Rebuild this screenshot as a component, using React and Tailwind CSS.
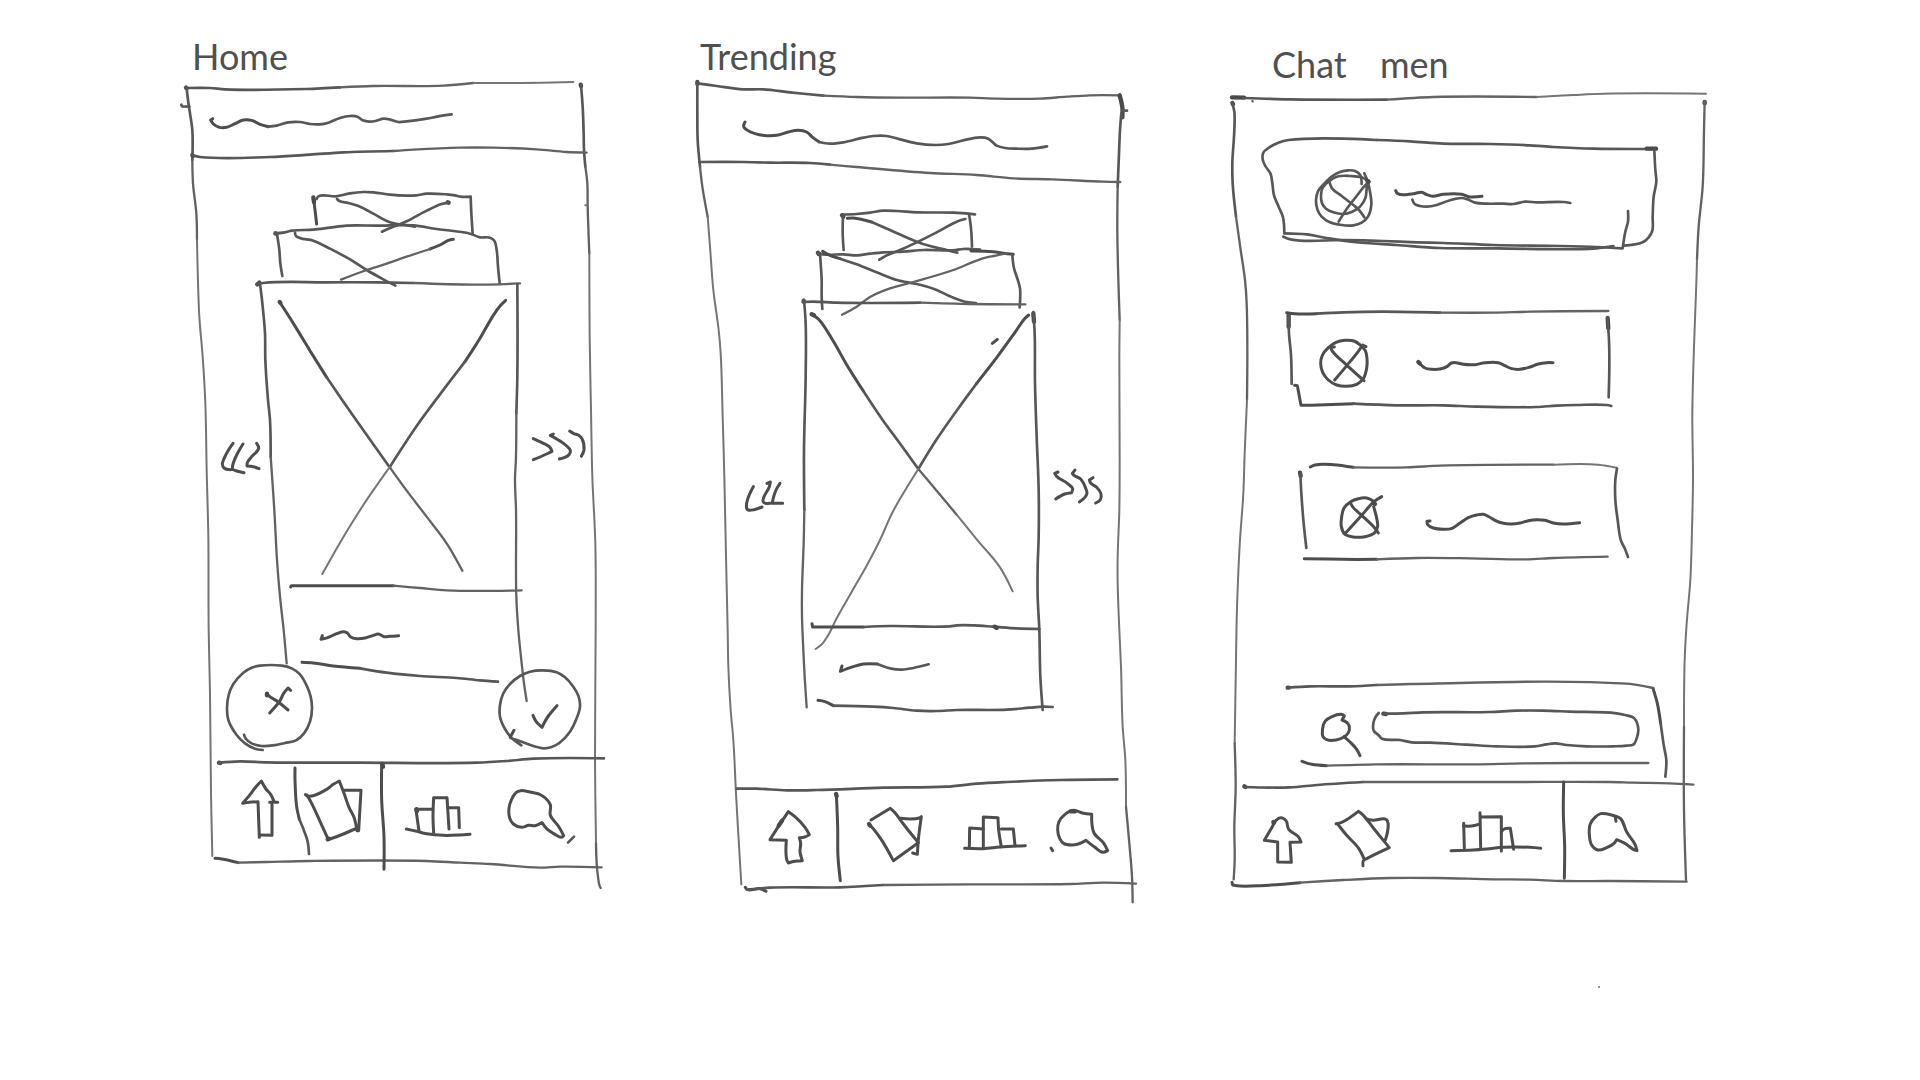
import React from "react";

/* Pen weights, in the ink's own units (three to a pixel). */
const PENS = {
  fine: { width: 6, color: "#757575" },
  line: { width: 7, color: "#636363" },
  pen: { width: 8, color: "#575757" },
  bold: { width: 9, color: "#4d4d4d" },
  knob: { width: 13, color: "#4a4a4a" },
};

/* Turns "x,y x,y ..." into a smooth path that keeps its sharp corners. */
function toPath(points) {
  const p = points.split(" ").map((s) => s.split(",").map(Number));
  const dist = (a, b) => Math.hypot(b[0] - a[0], b[1] - a[1]) || 1;
  const dirs = p.map((c, i) => {
    const a = p[i - 1];
    const b = p[i + 1];
    if (!a || !b) return [0, 0];
    const u = [(c[0] - a[0]) / dist(a, c), (c[1] - a[1]) / dist(a, c)];
    const v = [(b[0] - c[0]) / dist(c, b), (b[1] - c[1]) / dist(c, b)];
    if (u[0] * v[0] + u[1] * v[1] < 0.45) return [0, 0];
    const n = Math.hypot(u[0] + v[0], u[1] + v[1]);
    return [(u[0] + v[0]) / n, (u[1] + v[1]) / n];
  });
  let d = `M${p[0][0]} ${p[0][1]}`;
  for (let i = 1; i < p.length; i++) {
    const k = dist(p[i - 1], p[i]) * 0.33;
    const [a, b] = [p[i - 1], p[i]];
    d += `C${a[0] + dirs[i - 1][0] * k} ${a[1] + dirs[i - 1][1] * k} ${b[0] - dirs[i][0] * k} ${b[1] - dirs[i][1] * k} ${b[0]} ${b[1]}`;
  }
  return d;
}

/* Pen strokes laid over the element that holds them. */
function Ink({ box, at, strokes }) {
  const [x, y, w, h] = box;
  return (
    <svg
      aria-hidden="true"
      className="pointer-events-none absolute inset-0 h-full w-full overflow-visible"
      viewBox={`${(x - at[0]) * 3} ${(y - at[1]) * 3} ${w * 3} ${h * 3}`}
      preserveAspectRatio="none"
      fill="none"
      strokeLinecap="round"
      strokeLinejoin="round"
    >
      {strokes.map(([pen, points], i) => (
        <path key={i} d={toPath(points)} stroke={PENS[pen].color} strokeWidth={PENS[pen].width} />
      ))}
    </svg>
  );
}

function Tab({ label, box, at, strokes }) {
  return (
    <button type="button" aria-label={label} className="relative h-full cursor-pointer">
      <Ink box={box} at={at} strokes={strokes} />
    </button>
  );
}

function Title({ children, className }) {
  return (
    <h2 className={`font-[Lato,sans-serif] text-4xl leading-10 text-[#505050] ${className}`}>{children}</h2>
  );
}

const A1 = [160, 20];
const A2 = [160, 270];
const A3 = [160, 560];

function Home() {
  return (
    <section className="pt-9">
      <Title className="mb-2">Home</Title>
      <div className="relative">
        <Ink
          box={[192, 84, 400, 780]}
          at={A1}
          strokes={[
            ["pen", "78,204 150,204 195,208 440,207 540,202"],
            ["line", "540,202 640,198 850,197 940,189"],
            ["fine", "940,189 1080,189 1240,186"],
            ["knob", "78,203 80,205"],
            ["pen", "80,204 84,240 90,280 97,330 97,420"],
            ["line", "97,420 99,490 109,580 111,660"],
            ["fine", "111,660 113,750 118,890 128,1010 136,1150 140,1350 145,1550 146,1830 150,2020 153,2320 157,2508"],
            ["pen", "64,254 66,259 88,260"],
            ["knob", "1262,194 1263,198"],
            ["pen", "1263,195 1268,260 1271,340 1272,390 1276,440"],
            ["line", "1276,440 1282,490 1283,560 1288,700"],
            ["fine", "1288,700 1289,950 1293,1170 1297,1370 1306,1570 1307,1830 1305,2220 1308,2470"],
            ["line", "1308,2470 1310,2530 1314,2570 1318,2595 1322,2604"],
            ["bold", "165,2515 185,2517 235,2528"],
            ["line", "235,2528 320,2526 450,2523 800,2523 900,2528 990,2532 1140,2543 1200,2540 1325,2542"],
            ["fine", "1276,556 1279,556"],
          ]}
        />
        <header className="relative h-18">
          <Ink
            box={[192, 84, 400, 72]}
            at={A1}
            strokes={[
              ["knob", "97,406 99,407"],
              ["pen", "97,406 120,411 330,411 450,404 550,397 700,393"],
              ["line", "700,393 760,389 900,383 1000,383 1130,388 1220,396 1280,398"],
              ["bold", "158,296 152,300 160,312 178,322 200,322 225,311 250,300 275,301 300,313 325,320"],
              ["pen", "325,320 350,317 385,307 420,306 450,312 480,313 505,308 540,294 570,288 592,290 608,301 628,305 650,302 670,296 688,298 715,306 740,304 800,296 835,289 875,283"],
            ]}
          />
        </header>
        <div className="grid grid-cols-[70fr_256fr_74fr]">
          <div className="pt-[280px]">
            <button type="button" aria-label="Previous" className="relative ml-auto block h-12 w-11 cursor-pointer">
              <Ink
                box={[218, 436, 44, 48]}
                at={A2}
                strokes={[
                  ["bold", "219,520 205,541 190,571 187,582 192,594 212,599"],
                  ["bold", "249,522 230,555 218,586 217,598 230,603 252,608"],
                  ["bold", "290,520 296,535 275,560 262,578 261,588 280,590 297,596"],
                ]}
              />
            </button>
          </div>
          <article className="flex flex-col items-center pt-9">
            <div className="relative h-9 w-40">
              <Ink
                box={[310, 192, 160, 36]}
                at={A1}
                strokes={[
                  ["bold", "460,532 462,546 465,570 470,612"],
                  ["knob", "460,532 462,546"],
                  ["pen", "470,537 475,529 528,529 570,520 610,516 640,517 690,524 740,527 770,526 800,521 860,523 885,526 902,530 932,530 934,580 938,640"],
                  ["pen", "531,537 538,543 565,549 600,560 640,581 680,603 705,611 735,615 765,620"],
                  ["knob", "863,547 866,548"],
                  ["pen", "865,548 845,552 800,572 740,604 705,618 666,635"],
                ]}
              />
            </div>
            <div className="relative h-14 w-56">
              <Ink
                box={[278, 228, 224, 56]}
                at={A1}
                strokes={[
                  ["knob", "346,640 349,641"],
                  ["pen", "346,640 370,638 395,632 460,629 510,623 560,617 650,617 760,616 830,627 880,633 930,641 960,652 990,653 1003,662 1010,690 1014,740 1019,790"],
                  ["pen", "351,642 358,690 361,730 367,768"],
                  ["pen", "405,638 408,648 460,662 510,686 570,718 620,750 670,778 706,797"],
                  ["bold", "880,658 865,661 840,675 810,687"],
                  ["line", "810,687 740,710 680,731 620,750 543,779"],
                ]}
              />
            </div>
            <div className="relative h-[304px] w-full">
              <Ink
                box={[262, 284, 256, 304]}
                at={A2}
                strokes={[
                  ["knob", "292,43 298,38"],
                  ["pen", "290,43 310,39 500,37 650,37 760,39"],
                  ["line", "760,39 940,44 1020,43 1080,40"],
                  ["pen", "300,42 306,90 315,190 316,270 324,390 330,450 332,560"],
                  ["line", "332,560 343,720 351,870 360,980 371,1080 380,1180"],
                  ["pen", "1072,42 1072,320 1069,430"],
                  ["line", "1069,430 1068,560 1065,630 1068,720 1069,980 1075,1080 1085,1180 1092,1240 1100,1293"],
                  ["knob", "359,96 361,98"],
                  ["bold", "359,96 400,160 450,242 500,322"],
                  ["pen", "500,322 580,438 690,593"],
                  ["line", "690,593 740,662 800,740 860,820 907,902"],
                  ["bold", "1037,91 1022,106 1000,136 960,205 915,275"],
                  ["pen", "915,275 840,373 770,468 690,590"],
                  ["fine", "690,590 610,705 540,818 487,912"],
                ]}
              />
            </div>
            <div className="relative h-19 w-full">
              <Ink
                box={[262, 588, 256, 76]}
                at={A3}
                strokes={[
                  ["bold", "392,81 394,77 600,77 700,77"],
                  ["line", "700,77 780,84 860,91 1085,91"],
                  ["bold", "487,227 483,238 505,232 530,221 552,215 562,219 572,231 590,236 615,234 640,226 655,222 672,230 690,229 716,227"],
                  ["bold", "426,307 460,309 520,318 600,325"],
                  ["pen", "600,325 680,338 780,348 890,354 960,361 1014,365"],
                ]}
              />
            </div>
          </article>
          <div className="pt-[264px]">
            <button type="button" aria-label="Next" className="relative ml-3 block h-12 w-15 cursor-pointer">
              <Ink
                box={[530, 420, 60, 48]}
                at={A2}
                strokes={[
                  ["bold", "1120,506 1150,520 1168,530 1176,544 1160,552 1120,569"],
                  ["bold", "1180,492 1171,496 1195,510 1220,528 1231,541 1227,554 1198,567"],
                  ["bold", "1229,483 1240,490 1258,497 1266,506 1272,540 1264,559"],
                ]}
              />
            </button>
          </div>
        </div>
        <div className="mb-2 flex justify-between pr-2 pl-8">
          <button type="button" aria-label="Reject" className="relative size-22 cursor-pointer rounded-full">
            <Ink
              box={[224, 664, 88, 88]}
              at={A3}
              strokes={[
                ["pen", "308,570 285,566 255,550 230,525 205,480 201,445 206,405 220,372 250,338 275,323 300,317 365,317 395,325 420,343 440,377 452,410 456,445 450,485 432,520 408,541 375,549 340,556 305,558 275,550 258,537 252,524"],
                ["bold", "321,400 323,404 355,426 384,450"],
                ["bold", "392,391 384,384 371,400 360,422 329,459"],
                ["knob", "321,401 321,406"],
              ]}
            />
          </button>
          <button type="button" aria-label="Accept" className="relative size-22 cursor-pointer rounded-full">
            <Ink
              box={[496, 664, 88, 88]}
              at={A3}
              strokes={[
                ["pen", "1084,556 1055,534 1035,507 1020,470 1020,435 1029,402 1050,372 1080,348 1110,335 1150,331 1190,337 1215,352 1240,380 1256,410 1260,440 1250,475 1230,515 1198,549 1175,561 1150,565 1120,558 1085,545 1052,534"],
                ["bold", "1062,511 1051,531"],
                ["bold", "1119,466 1128,484 1146,502 1154,486 1165,468 1191,437"],
              ]}
            />
          </button>
        </div>
        <nav className="relative grid h-26 grid-cols-[108fr_84fr_106fr_102fr]">
          <Ink
            box={[192, 760, 400, 104]}
            at={A3}
            strokes={[
              ["knob", "177,608 181,609"],
              ["pen", "177,608 240,604 320,607 600,608 950,608 1040,603 1120,596 1332,595"],
              ["bold", "405,624 405,660 410,740 418,778"],
              ["pen", "418,778 432,812 443,845 447,882"],
              ["bold", "665,612 665,720 672,830 672,928"],
              ["knob", "667,612 669,620"],
              ["pen", "1242,830 1224,848"],
            ]}
          />
          <Tab
            label="Up"
            box={[192, 760, 108, 104]}
            at={A3}
            strokes={[
              ["bold", "298,832 294,725 268,727 248,730 270,704 288,680 304,663 318,687 332,703 343,727 353,727"],
              ["bold", "329,727 336,727 336,826 299,825"],
            ]}
          />
          <Tab
            label="Cards"
            box={[300, 760, 84, 104]}
            at={A3}
            strokes={[
              ["bold", "436,704 445,709 500,688 520,673 538,663 552,700 567,742 582,772 591,812 596,812 603,691 550,691"],
              ["bold", "441,705 455,730 480,784 505,839 535,828 585,807"],
              ["knob", "503,838 507,836"],
            ]}
          />
          <Tab
            label="Rankings"
            box={[384, 760, 106, 104]}
            at={A3}
            strokes={[
              ["bold", "739,807 770,814 800,821 850,826 900,825 930,823"],
              ["bold", "768,750 777,814"],
              ["knob", "769,748 771,753"],
              ["bold", "770,748 817,748"],
              ["bold", "821,818 819,770 821,713 861,713 867,807"],
              ["bold", "864,743 896,743 898,803"],
            ]}
          />
          <Tab
            label="Chat"
            box={[490, 760, 102, 104]}
            at={A3}
            strokes={[
              ["bold", "1137,702 1110,696 1082,692 1068,698 1054,720 1047,745 1049,774 1060,792 1085,802 1106,796 1125,797 1146,788 1160,806 1185,823 1204,832 1211,827 1195,798 1171,766 1171,734 1156,714 1137,702"],
            ]}
          />
        </nav>
      </div>
    </section>
  );
}

const B1 = [670, 20];
const B2 = [670, 290];
const B3 = [670, 600];

function Trending() {
  return (
    <section className="pt-9">
      <Title className="mb-2">Trending</Title>
      <div className="relative">
        <Ink
          box={[700, 84, 424, 804]}
          at={B1}
          strokes={[
            ["knob", "82,186 82,192"],
            ["pen", "82,190 140,198 220,208 280,208 360,217 460,227"],
            ["line", "460,227 560,231 690,233 900,233 980,236 1110,236 1190,230 1260,226 1348,226"],
            ["pen", "82,186 82,280 83,360 90,440"],
            ["line", "90,440 97,500 113,590"],
            ["fine", "113,590 120,680 130,810 146,930 152,1000 158,1190 163,1370 168,1610 173,1830 175,1940 182,2070 190,2160 198,2320 206,2460 214,2593"],
            ["knob", "1349,226 1357,262 1357,292"],
            ["pen", "1358,272 1371,272"],
            ["pen", "1354,280 1350,330 1347,400 1343,500"],
            ["line", "1343,500 1342,640 1349,900"],
            ["fine", "1349,900 1348,1010 1349,1310 1348,1470 1343,1610 1343,1690 1348,1830 1353,1940 1358,2120 1366,2220 1368,2360"],
            ["line", "1368,2360 1378,2470 1386,2570 1388,2647"],
            ["bold", "226,2602 232,2609 270,2606 288,2614"],
            ["pen", "232,2609 300,2603 510,2602 640,2595"],
            ["line", "640,2595 900,2593 1200,2592 1300,2588 1398,2591"],
          ]}
        />
        <header className="relative h-24">
          <Ink
            box={[700, 84, 424, 96]}
            at={B1}
            strokes={[
              ["pen", "88,426 220,426 300,428 420,429 480,434"],
              ["line", "480,434 560,441 780,459 920,465 1030,475 1150,478 1300,485 1351,486"],
              ["bold", "225,306 221,320 229,329 255,341 290,347 325,345 355,336 385,331 410,336 428,352 448,366"],
              ["pen", "448,366 480,371 520,367 580,353 610,348 650,348 690,358 740,370 795,375 835,372 880,361 930,352 955,356 980,377 1005,384 1040,386 1085,386 1131,379"],
            ]}
          />
        </header>
        <div className="grid grid-cols-[104fr_236fr_84fr] pb-20">
          <div className="pt-[296px]">
            <button type="button" aria-label="Previous" className="relative mr-4 ml-auto block h-12 w-11 cursor-pointer">
              <Ink
                box={[744, 476, 44, 48]}
                at={B2}
                strokes={[
                  ["bold", "250,590 230,655 235,660 252,659 276,651"],
                  ["bold", "291,580 301,576 298,590 279,632 282,638 300,640"],
                  ["bold", "330,580 318,600 306,640 338,640"],
                ]}
              />
            </button>
          </div>
          <article className="flex flex-col items-center pt-8">
            <div className="relative mr-7 h-10 w-32">
              <Ink
                box={[844, 212, 128, 40]}
                at={B1}
                strokes={[
                  ["knob", "516,586 520,590"],
                  ["pen", "516,584 560,582 600,578 640,572 680,573 740,577 850,578 915,583"],
                  ["pen", "519,588 518,640 521,690"],
                  ["pen", "897,582 903,625 906,680"],
                  ["bold", "532,595 550,594 605,606"],
                  ["pen", "605,606 660,630 740,665 780,678 830,690 862,698"],
                  ["pen", "886,597 865,603 800,637 740,667 690,690 650,706 628,719"],
                ]}
              />
            </div>
            <div className="relative mr-1 h-12 w-50">
              <Ink
                box={[820, 252, 200, 48]}
                at={B1}
                strokes={[
                  ["knob", "444,698 446,702"],
                  ["pen", "444,700 470,704 520,703 560,706 600,701 640,697 700,695 760,690 850,691 880,687 930,689"],
                  ["bold", "903,693 970,695 1000,700 1030,703"],
                  ["pen", "450,700 452,730 455,780 455,830 457,867"],
                  ["pen", "1027,705 1032,745 1045,785 1050,805 1049,862"],
                  ["bold", "458,694 475,704 510,716"],
                  ["pen", "510,716 560,733 620,757 680,780 740,792 790,806 850,833 890,846 918,849"],
                  ["line", "1010,700 970,708 930,718 850,750 730,786 660,805 600,831 560,860 516,884"],
                ]}
              />
            </div>
            <div className="relative h-82 w-full">
              <Ink
                box={[804, 300, 236, 328]}
                at={B2}
                strokes={[
                  ["knob", "401,32 402,36"],
                  ["pen", "398,36 430,35 500,38 750,38"],
                  ["line", "750,38 900,42 1066,43"],
                  ["pen", "402,30 407,100 407,260 402,480 403,660"],
                  ["line", "403,660 401,760 396,900 396,980 400,1080 404,1160 410,1252"],
                  ["knob", "1090,70 1092,95"],
                  ["pen", "1090,66 1094,130 1095,280 1100,440 1106,600 1106,740 1103,830 1103,920 1108,1020 1111,1160 1118,1260"],
                  ["knob", "425,73 432,76"],
                  ["bold", "425,73 445,87 490,154 530,224 580,303"],
                  ["pen", "580,303 640,393 680,447 745,537"],
                  ["line", "745,537 800,602 860,674"],
                  ["fine", "860,674 920,748 990,832 1028,904"],
                  ["bold", "1076,75 1064,86 1035,127 980,203 920,280"],
                  ["pen", "920,280 860,362 800,448 745,537"],
                  ["fine", "745,537 700,610 665,672 630,750 590,827 550,897 500,985 475,1035 458,1060 437,1077"],
                  ["bold", "967,160 982,148"],
                ]}
              />
            </div>
            <div className="relative h-20 w-full">
              <Ink
                box={[804, 628, 236, 80]}
                at={B3}
                strokes={[
                  ["bold", "426,71 428,81 580,81"],
                  ["pen", "580,81 660,78 840,79 860,76 910,76 970,80 1040,85 1108,87"],
                  ["knob", "974,80 980,84"],
                  ["bold", "516,198 511,214 550,200 580,192 622,192"],
                  ["pen", "622,192 660,205 695,209 730,204 776,193"],
                  ["bold", "444,301 465,305 490,317"],
                  ["pen", "490,317 610,320 670,324 740,332 800,333 860,330 1010,329 1080,323 1120,320 1148,321"],
                ]}
              />
            </div>
          </article>
          <div className="pt-[284px]">
            <button type="button" aria-label="Next" className="relative ml-3 block h-12 w-14 cursor-pointer">
              <Ink
                box={[1052, 464, 56, 48]}
                at={B2}
                strokes={[
                  ["bold", "1164,546 1154,550 1160,559 1192,580 1208,596 1205,608 1184,612 1157,627"],
                  ["bold", "1215,540 1207,550 1212,556 1232,567 1246,592 1251,610 1244,623 1228,636"],
                  ["bold", "1269,563 1258,570 1262,579 1280,592 1293,612 1291,629 1277,639"],
                ]}
              />
            </button>
          </div>
        </div>
        <nav className="relative grid h-25 grid-cols-[138fr_104fr_96fr_86fr]">
          <Ink
            box={[700, 788, 424, 100]}
            at={B3}
            strokes={[
              ["pen", "200,566 260,566 350,571 440,570 640,563 830,560 920,551 1010,546 1170,540 1342,538"],
              ["bold", "499,582 503,680 504,770 511,842"],
              ["knob", "498,582 500,588"],
            ]}
          />
          <Tab
            label="Up"
            box={[700, 788, 138, 100]}
            at={B3}
            strokes={[
              ["bold", "300,719 325,680 355,635 375,650 405,682 418,704 404,711 388,713 392,730 390,755 397,782 375,784 355,789 350,778 349,721 300,719"],
              ["knob", "336,662 326,677"],
            ]}
          />
          <Tab
            label="Cards"
            box={[838, 788, 104, 100]}
            at={B3}
            strokes={[
              ["bold", "603,660 661,625 673,636 700,672 745,728 670,782 636,722 610,686 596,672"],
              ["bold", "692,655 748,654 754,650 746,710 742,763 728,759"],
              ["knob", "597,672 600,677"],
            ]}
          />
          <Tab
            label="Rankings"
            box={[942, 788, 96, 100]}
            at={B3}
            strokes={[
              ["bold", "884,745 940,746 990,741 1066,737"],
              ["bold", "898,742 899,684 940,687"],
              ["bold", "940,742 940,651 984,653 986,690 994,740"],
              ["bold", "994,687 1030,687 1035,737"],
            ]}
          />
          <Tab
            label="Chat"
            box={[1038, 788, 86, 100]}
            at={B3}
            strokes={[
              ["bold", "1265,643 1240,640 1210,631 1185,643 1167,665 1163,690 1169,715 1182,731 1205,735 1225,732 1248,721 1275,742 1298,757 1313,752 1300,728 1272,699 1265,643"],
              ["knob", "1202,634 1215,634"],
              ["bold", "1143,744 1148,752"],
            ]}
          />
        </nav>
      </div>
    </section>
  );
}

const C1 = [1210, 20];
const C2 = [1210, 280];
const C3 = [1210, 660];

function ChatMenu() {
  return (
    <section className="pt-11">
      <Title className="mb-3 pl-10">
        <span>Chat</span> <span className="ml-6">men</span>
      </Title>
      <div className="relative">
        <Ink
          box={[1232, 96, 472, 792]}
          at={C1}
          strokes={[
            ["knob", "66,232 102,233"],
            ["pen", "102,234 240,238 530,239"],
            ["line", "530,239 670,231 980,231"],
            ["fine", "980,231 1090,225 1180,221 1488,221"],
            ["line", "127,243 128,244"],
            ["knob", "67,249 69,253"],
            ["pen", "67,250 73,275 73,330 67,430 68,490 78,590"],
            ["line", "78,590 92,690 105,780 110,850 112,980 111,1140"],
            ["fine", "111,1140 104,1300 100,1420 90,1560 84,1680 80,1800 78,1920 74,2170"],
            ["line", "74,2170 77,2300 73,2420 74,2520 71,2578"],
            ["knob", "1484,246 1484,250"],
            ["line", "1484,244 1482,330 1478,500 1466,620 1461,720"],
            ["fine", "1461,720 1459,790 1452,980 1447,1180 1449,1380 1446,1530 1441,1680 1430,1810 1424,1920 1422,2120"],
            ["line", "1422,2120 1422,2370 1428,2580"],
            ["bold", "66,2587 68,2595 90,2598 150,2597 270,2588"],
            ["line", "270,2588 400,2580 540,2574 680,2574 850,2578 960,2579 1060,2583 1200,2583 1430,2585"],
          ]}
        />
        <ul className="pt-10">
          <li className="mr-12 ml-8">
            <button type="button" aria-label="Conversation 1" className="relative block h-28 w-full cursor-pointer">
              <Ink
                box={[1264, 136, 392, 112]}
                at={C1}
                strokes={[
                  ["pen", "500,360 235,360 205,368 175,384 160,398 158,418 166,438 182,462 187,490 192,526 206,560 219,592 223,640"],
                  ["pen", "500,360 600,364 700,371 840,372 960,376 1030,381 1150,386 1338,387"],
                  ["knob", "1310,386 1338,386"],
                  ["pen", "1333,390 1336,450 1339,485 1331,530 1328,590 1327,632 1316,652 1298,667 1240,677"],
                  ["pen", "223,640 290,643 350,654 430,666 560,675 690,684 860,685 1160,685 1210,678"],
                  ["pen", "220,650 245,659 400,660 520,663 620,667 700,669 850,675 1050,678 1160,681 1238,685 1246,635 1254,605 1254,573"],
                ]}
              />
              <Ink
                box={[1264, 136, 392, 112]}
                at={C1}
                strokes={[
                  ["pen", "455,492 450,464 435,453 415,451 390,456 365,470 342,492 325,512 318,540 322,568 335,590 358,606 395,615 430,616 455,608 474,590 484,555 480,515 473,485 463,460"],
                  ["pen", "475,484 455,472 420,468 385,469 358,483 338,503 333,525 336,550 348,566 370,577 400,582 425,576 450,560 466,535 470,505 472,480"],
                  ["pen", "358,485 366,505 395,528 430,555 447,570 463,592"],
                  ["pen", "476,486 462,500 440,528 412,564 386,605"],
                  ["knob", "472,482 476,485"],
                  ["bold", "557,512 563,521 610,521 635,517 650,524 668,529 700,523 755,523 775,530 816,529"],
                  ["pen", "607,539 614,552 630,558 650,560 680,555 720,541 755,534 772,538 795,548 830,551 880,551 910,552 945,545 980,547 1060,546 1081,549"],
                ]}
              />
            </button>
          </li>
          <li className="mt-16 mr-22 ml-14">
            <button type="button" aria-label="Conversation 2" className="relative block h-24 w-full cursor-pointer">
              <Ink
                box={[1288, 312, 328, 96]}
                at={C2}
                strokes={[
                  ["bold", "230,98 255,101 320,101"],
                  ["pen", "320,101 400,97 520,95 690,98"],
                  ["line", "690,98 850,98 960,95 1195,93"],
                  ["knob", "236,106 236,140"],
                  ["pen", "236,106 237,160 243,225 245,312"],
                  ["bold", "254,316 262,317 273,376 325,375 430,371"],
                  ["pen", "430,371 560,376 700,376 800,380 980,381 1040,377 1100,375 1190,375 1204,378"],
                  ["knob", "1193,114 1195,145"],
                  ["pen", "1192,112 1197,180 1198,260 1196,352"],
                  ["bold", "452,196 432,183 405,181 378,187 355,203 337,226 332,250 338,277 355,300 380,315 410,319 440,313 460,296 470,265 471,235 466,212 452,196"],
                  ["bold", "468,200 458,195 445,214 411,256 374,300"],
                  ["bold", "373,201 362,202 366,212 411,256 462,302"],
                  ["bold", "626,247 645,264 665,268 690,267 712,259 724,249 738,248 760,253 795,254 825,248 865,248 885,257 905,266 930,268 960,261 985,252 1010,248 1029,248"],
                  ["knob", "625,246 629,250"],
                ]}
              />
            </button>
          </li>
          <li className="mt-14 mr-18 ml-16">
            <button type="button" aria-label="Conversation 3" className="relative block h-24 w-full cursor-pointer">
              <Ink
                box={[1296, 464, 336, 96]}
                at={C2}
                strokes={[
                  ["bold", "301,561 315,555 370,554 430,562"],
                  ["line", "430,562 590,562 690,557 1030,554"],
                  ["fine", "1030,554 1165,554 1220,563"],
                  ["pen", "1221,566 1216,600 1216,660 1223,720 1233,782 1244,805 1254,831"],
                  ["knob", "270,578 272,588"],
                  ["pen", "271,580 274,640 281,730 289,804"],
                  ["bold", "283,836 400,838 500,838"],
                  ["line", "500,838 620,834 780,835 950,838 1030,834 1193,830"],
                  ["bold", "493,665 470,654 445,656 422,665 402,684 395,710 394,740 404,762 425,770 465,770 495,757 503,738 499,710 491,680"],
                  ["bold", "515,650 492,665 455,706 404,762"],
                  ["bold", "422,670 430,683 455,706 495,745 505,759"],
                  ["knob", "491,668 495,672"],
                  ["bold", "660,723 651,724 653,734 670,744 700,748 724,746 750,729 775,713 800,705 820,703 838,711 855,721 880,730 905,732 930,729 955,722 980,719 1005,721 1030,729 1060,732 1109,728"],
                ]}
              />
            </button>
          </li>
        </ul>
        <form role="search" className="relative mt-31 mr-10 mb-1 ml-14 flex h-24 items-start gap-3 pt-7 pr-7 pl-9">
          <Ink
            box={[1288, 684, 376, 96]}
            at={C3}
            strokes={[
              ["knob", "233,83 236,83"],
              ["pen", "233,83 300,79 420,79 500,75"],
              ["line", "500,75 600,72 1250,71 1275,74 1330,84"],
              ["bold", "1330,88 1342,130 1352,190"],
              ["pen", "1352,190 1362,260 1369,300 1366,350"],
              ["bold", "276,304 305,313 350,317"],
              ["line", "350,317 500,313 800,313 940,310 1315,309"],
            ]}
          />
          <label htmlFor="chat-search" aria-label="Search" className="relative h-11 w-10 cursor-pointer">
            <Ink
              box={[1324, 712, 40, 44]}
              at={C3}
              strokes={[
                ["bold", "396,180 403,168 394,163 366,170 345,184 338,205 339,230 350,239 378,240 402,231 415,218 418,200 411,188 396,180"],
                ["bold", "402,230 425,251 440,268 450,287"],
              ]}
            />
          </label>
          <div className="relative h-9 grow">
            <Ink
              box={[1376, 712, 260, 36]}
              at={C3}
              strokes={[
                ["knob", "520,161 528,162"],
                ["pen", "522,161 580,160 640,157 840,156 920,152 1000,152 1080,155 1220,160 1245,165 1273,175 1285,208 1279,238 1271,253 1250,257 1210,259 1130,259 1070,255 1035,250 1010,253 975,259 860,259 770,254 660,248 605,247 570,240 516,236 505,225 491,212 490,190 496,172 506,159"],
              ]}
            />
            <input
              id="chat-search"
              type="search"
              className="h-full w-full appearance-none bg-transparent px-4 font-[Lato,sans-serif] text-base text-[#505050] outline-none"
            />
          </div>
        </form>
        <nav className="relative grid h-26 grid-cols-[88fr_88fr_156fr_140fr]">
          <Ink
            box={[1232, 784, 472, 104]}
            at={C3}
            strokes={[
              ["knob", "103,379 106,381"],
              ["pen", "104,381 240,382 320,375 460,366"],
              ["line", "460,366 900,366 1200,366 1270,368 1380,370 1450,374"],
              ["bold", "1061,366 1060,460 1064,560 1063,655"],
            ]}
          />
          <Tab
            label="Up"
            box={[1232, 784, 88, 104]}
            at={C3}
            strokes={[
              ["bold", "203,546 163,541 187,500 198,481 212,473 228,482 236,508 265,530 273,546 240,547 244,607 203,606 203,546"],
              ["knob", "190,486 191,489"],
            ]}
          />
          <Tab
            label="Cards"
            box={[1320, 784, 88, 104]}
            at={C3}
            strokes={[
              ["bold", "378,491 395,487 445,454 460,466 490,504 538,563 470,596 460,602 459,617"],
              ["bold", "383,492 410,526 446,565 462,596"],
              ["bold", "472,478 490,481 525,477 532,482 526,540"],
            ]}
          />
          <Tab
            label="Rankings"
            box={[1408, 784, 156, 104]}
            at={C3}
            strokes={[
              ["bold", "723,572 790,570 830,567 880,562 960,562 992,565"],
              ["bold", "761,490 763,564"],
              ["bold", "761,498 785,498 806,493"],
              ["bold", "810,458 812,562"],
              ["bold", "812,471 874,470 874,573"],
              ["bold", "874,515 885,506 901,505 905,530 911,568"],
            ]}
          />
          <Tab
            label="Chat"
            box={[1564, 784, 140, 104]}
            at={C3}
            strokes={[
              ["bold", "1218,484 1215,468 1192,462 1172,461 1155,472 1141,491 1138,525 1145,555 1163,570 1190,563 1212,550 1220,539 1245,550 1270,568 1281,572 1275,553 1250,516 1232,476 1215,468"],
            ]}
          />
        </nav>
      </div>
    </section>
  );
}

export default function App() {
  return (
    <div className="min-h-screen bg-white">
      <main className="grid grid-cols-[400fr_424fr_472fr] items-start gap-x-27 pr-54 pl-48">
        <Home />
        <Trending />
        <ChatMenu />
      </main>
      <div className="flex justify-end pt-24 pr-80">
        <span className="mt-0.5 size-0.5 rounded-full bg-gray-500" />
      </div>
    </div>
  );
}
